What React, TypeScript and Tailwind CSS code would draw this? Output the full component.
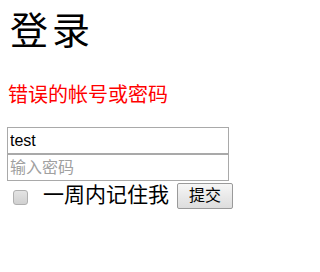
export default function App() {
  const cjk = "font-['Liberation_Sans','Noto_Sans_CJK_SC',sans-serif]";
  return (
    <div className={`min-h-[272px] w-[274px] bg-white ${cjk}`}>
      <h1 className="pl-[10px] pt-[8px] text-[38px] leading-[46px] font-normal tracking-[4px] text-black">
        登录
      </h1>
      <p className="mt-[29px] pl-[8px] text-[20px] leading-[24px] text-[#ff0000]">
        错误的帐号或密码
      </p>
      <form className="mt-[20px] flex flex-col pl-[7px]">
        <input
          defaultValue="test"
          className="h-[27px] w-[222px] border border-[#a9a9a9] px-[2px] text-[16px] text-black outline-none"
        />
        <input
          type="password"
          placeholder="输入密码"
          className="h-[27px] w-[222px] border border-[#a9a9a9] px-[2px] text-[16px] outline-none placeholder:text-[#a0a0a0]"
        />
        <div className="flex items-center">
          <input
            type="checkbox"
            className="ml-[6px] mt-[4px] h-[15px] w-[15px] appearance-none rounded-[3px] border border-[#b0b0b0] bg-gradient-to-b from-[#e4e4e4] to-[#d0d0d0]"
          />
          <span className="ml-[15px] text-[21px] leading-[28px] text-black">一周内记住我</span>
          <button
            type="button"
            className="ml-[8px] mt-[1px] h-[26px] w-[56px] rounded-[2px] border border-[#9a9a9a] bg-gradient-to-b from-[#f6f6f6] to-[#dddddd] text-[16px] leading-[20px] text-black"
          >
            提交
          </button>
        </div>
      </form>
    </div>
  );
}
